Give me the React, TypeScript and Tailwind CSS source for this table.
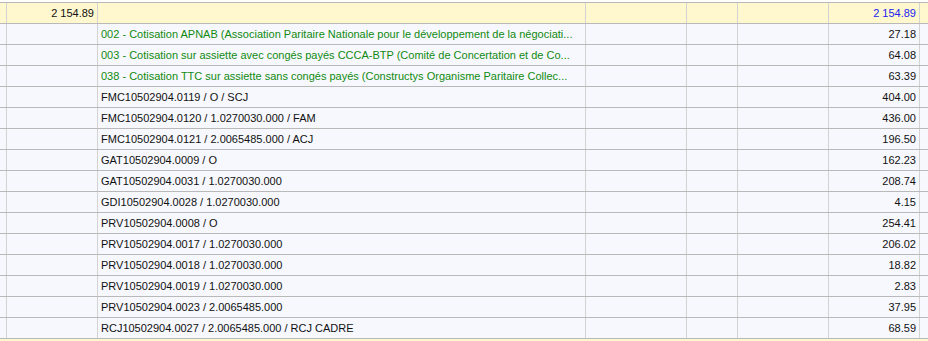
type Row = {
  label: string;
  amount: string;
  green?: boolean;
};

const rows: Row[] = [
  {
    label:
      "002 - Cotisation APNAB (Association Paritaire Nationale pour le développement de la négociati...",
    amount: "27.18",
    green: true,
  },
  {
    label:
      "003 - Cotisation sur assiette avec congés payés CCCA-BTP (Comité de Concertation et de Co...",
    amount: "64.08",
    green: true,
  },
  {
    label:
      "038 - Cotisation TTC sur assiette sans congés payés (Constructys Organisme Paritaire Collec...",
    amount: "63.39",
    green: true,
  },
  { label: "FMC10502904.0119 / O / SCJ", amount: "404.00" },
  { label: "FMC10502904.0120 / 1.0270030.000 / FAM", amount: "436.00" },
  { label: "FMC10502904.0121 / 2.0065485.000 / ACJ", amount: "196.50" },
  { label: "GAT10502904.0009 / O", amount: "162.23" },
  { label: "GAT10502904.0031 / 1.0270030.000", amount: "208.74" },
  { label: "GDI10502904.0028 / 1.0270030.000", amount: "4.15" },
  { label: "PRV10502904.0008 / O", amount: "254.41" },
  { label: "PRV10502904.0017 / 1.0270030.000", amount: "206.02" },
  { label: "PRV10502904.0018 / 1.0270030.000", amount: "18.82" },
  { label: "PRV10502904.0019 / 1.0270030.000", amount: "2.83" },
  { label: "PRV10502904.0023 / 2.0065485.000", amount: "37.95" },
  { label: "RCJ10502904.0027 / 2.0065485.000 / RCJ CADRE", amount: "68.59" },
];

const cell = "h-full shrink-0 border-r border-[#d3d3d3] px-[3px] flex items-center";

const App = () => {
  return (
    <div
      className="w-[928px] h-[341px] overflow-hidden bg-white pt-[2px] text-[11px] text-[#111]"
      style={{ fontFamily: '"Liberation Sans", Arial, sans-serif' }}
    >
      {/* Groupe total */}
      <div className="flex h-[22px] border-y border-[#b9b9b9] bg-[#fff8cf]">
        <div className="h-full shrink-0 w-[7px] border-r border-[#d3d3d3]" />
        <div className={`${cell} w-[91px] justify-end`}>2 154.89</div>
        <div className={`${cell} w-[488px]`} />
        <div className={`${cell} w-[101px]`} />
        <div className={`${cell} w-[51px]`} />
        <div className={`${cell} w-[91px]`} />
        <div className={`${cell} w-[91px] justify-end text-[#2323ee]`}>2 154.89</div>
        <div className="flex-1" />
      </div>

      {/* Lignes */}
      {rows.map((row, i) => (
        <div key={i} className="flex h-[21px] border-b border-[#b9b9b9] bg-[#f7f8fd]">
          <div className="h-full shrink-0 w-[7px] border-r border-[#d3d3d3]" />
          <div className={`${cell} w-[91px]`} />
          <div className={`${cell} w-[488px] min-w-0`}>
            <span className={`whitespace-nowrap ${row.green ? "text-[#118a11]" : ""}`}>{row.label}</span>
          </div>
          <div className={`${cell} w-[101px]`} />
          <div className={`${cell} w-[51px]`} />
          <div className={`${cell} w-[91px]`} />
          <div className={`${cell} w-[91px] justify-end`}>{row.amount}</div>
          <div className="flex-1" />
        </div>
      ))}

      <div className="h-[3px] bg-[#fff8cf]" />
    </div>
  );
};

export default App;
